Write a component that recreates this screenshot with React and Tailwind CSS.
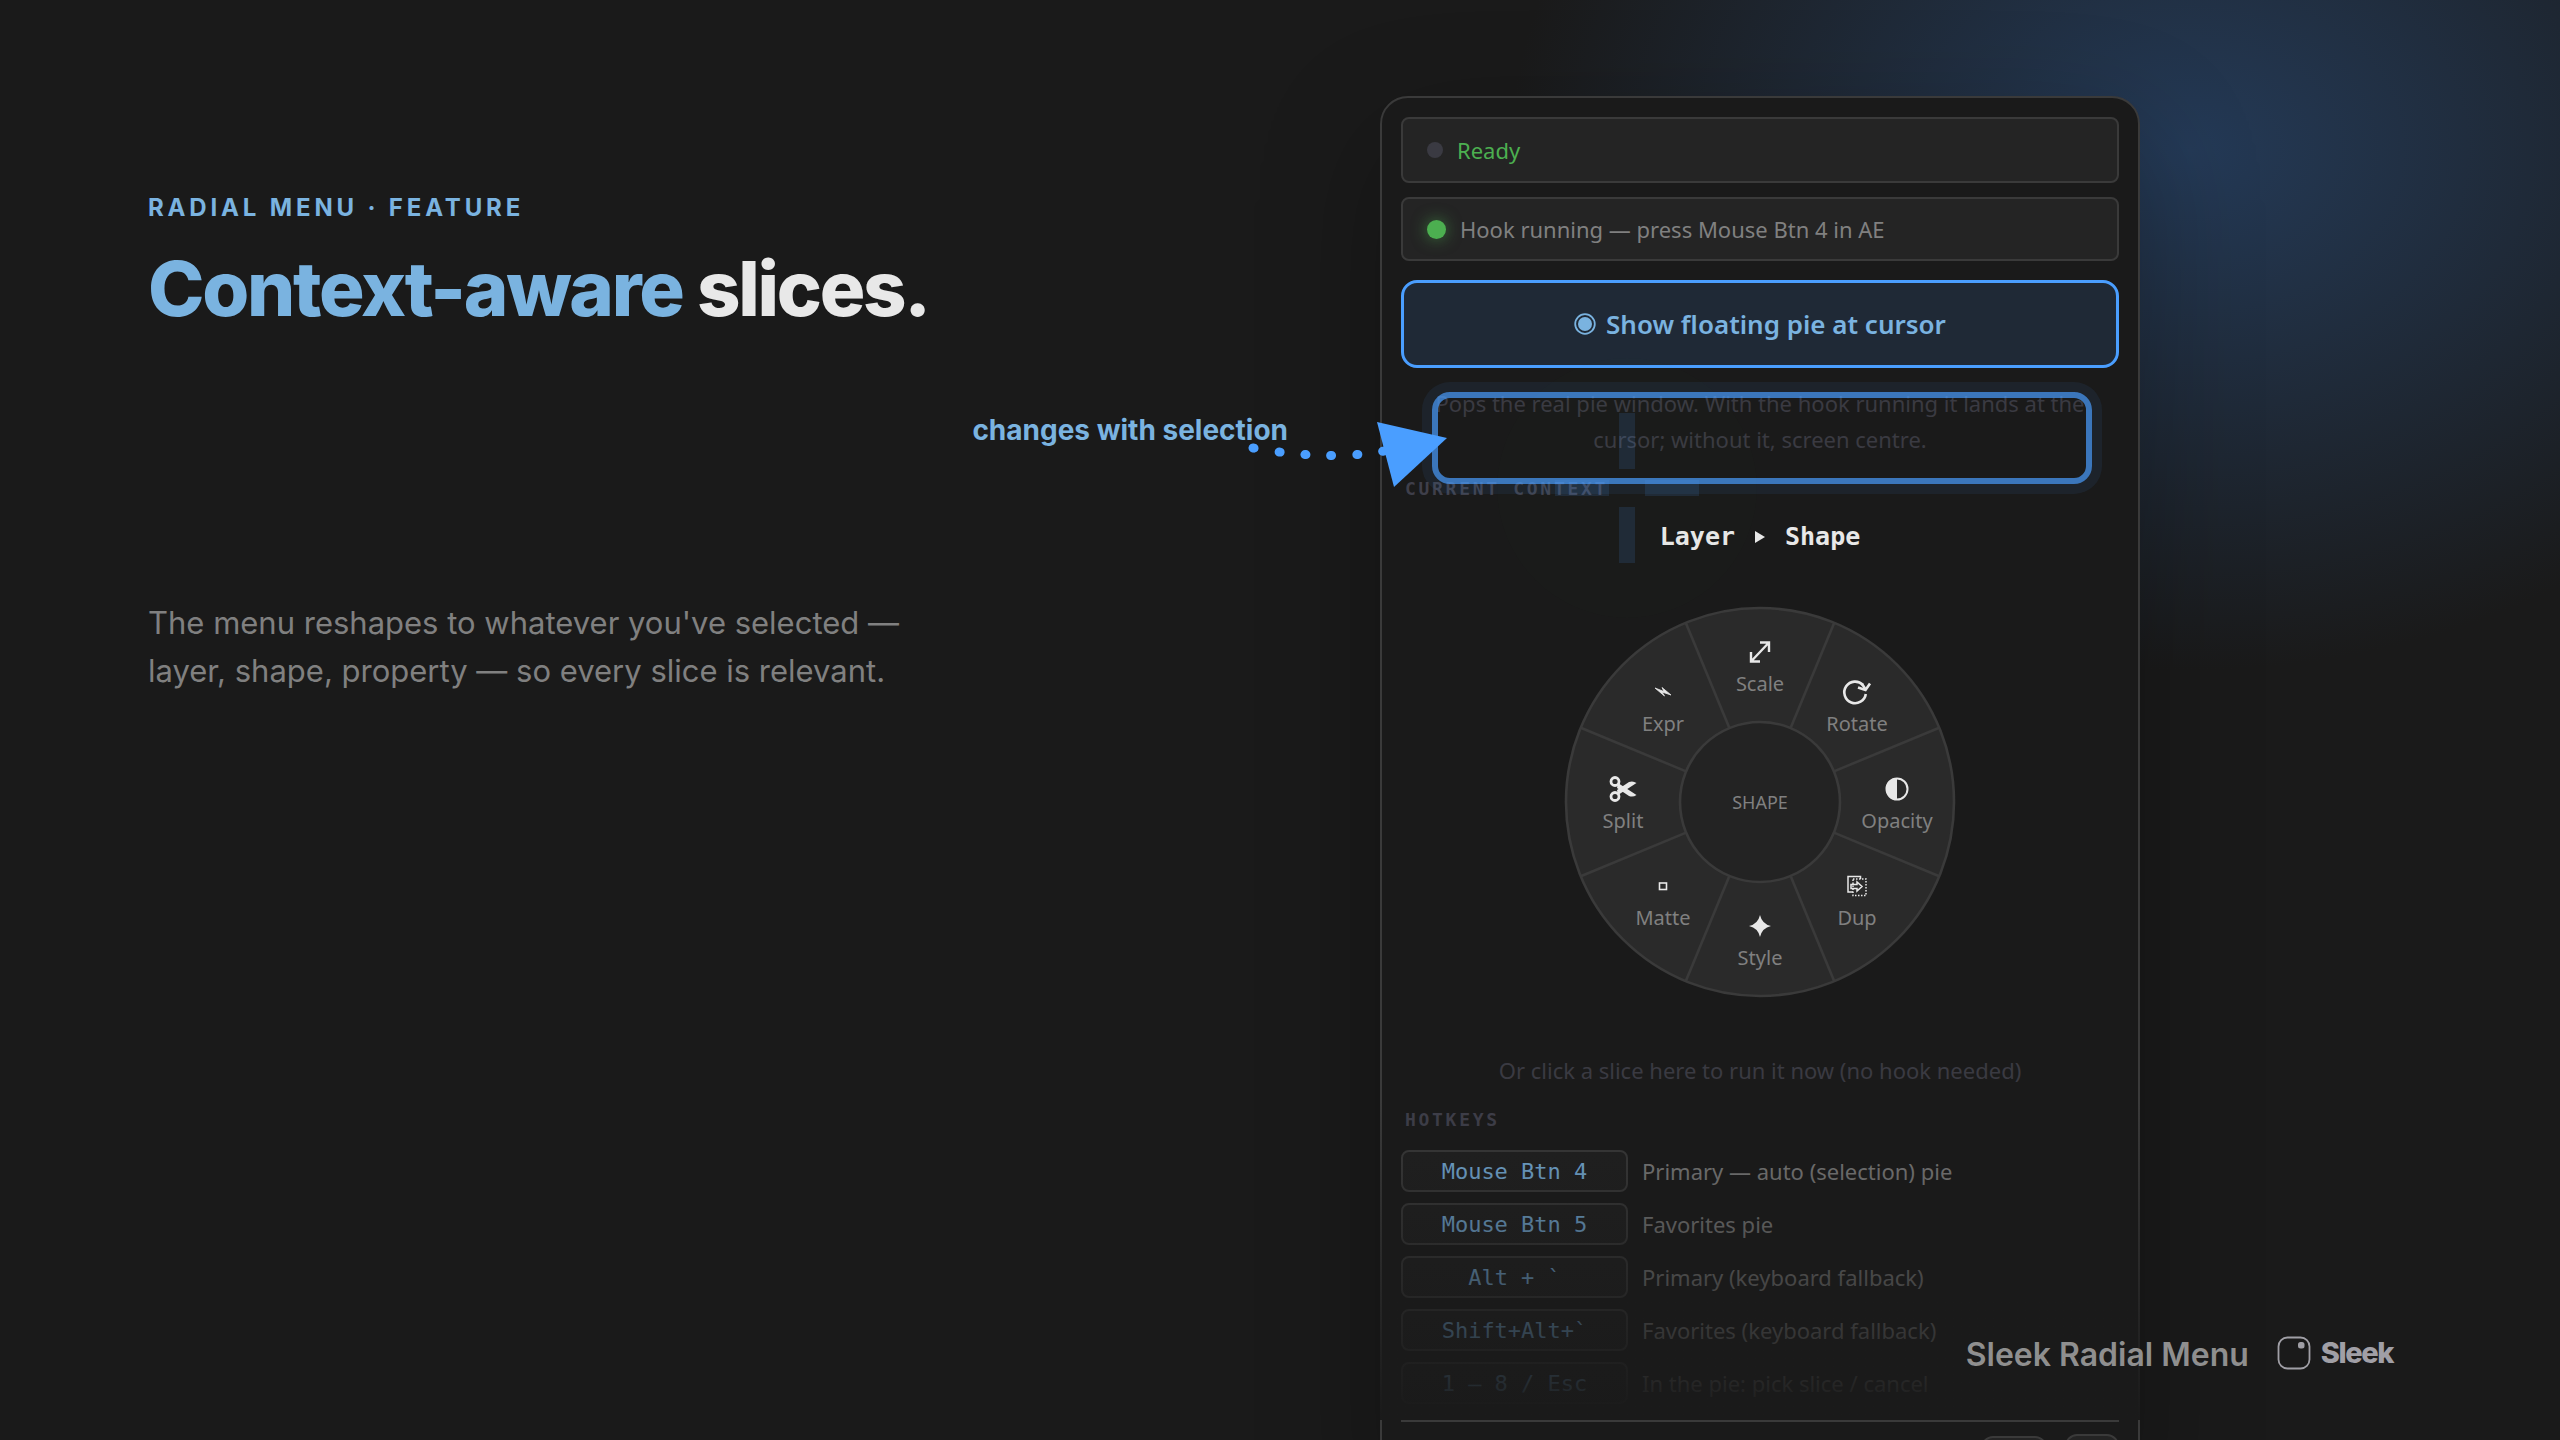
const icons = {
  scale: (
    <g fill="none" stroke="#e8e8e8" strokeWidth="2.400">
      <path d="M-8.500 9 8.500-9M0-9.500H9V0M-9 0V9.500H0" />
    </g>
  ),
  rotate: (
    <g fill="none" stroke="#e8e8e8" strokeWidth="2.600">
      <path d="M6-7A10.800 10.800 0 1 0 8.800 2" />
      <path d="M1-4.500 8.500-2 13-8.500" strokeWidth="2.600" />
      <path d="M5-8 9-2" />
    </g>
  ),
  opacity: (
    <g>
      <circle r="10.500" fill="none" stroke="#e8e8e8" strokeWidth="2" />
      <path d="M0-11A11 11 0 0 0 0 11Z" fill="#e8e8e8" />
    </g>
  ),
  dup: (
    <g fill="none" stroke="#e8e8e8" strokeWidth="1.500">
      <path d="M-4 6H-9V-9.500H3.500V-7" />
      <path d="M-4-7H9V9.500H-4Z" strokeDasharray="1.500 1.500" />
      <path d="M-6-1.500H0V-4L5 0.500 0 5V2.500H-6Z" />
    </g>
  ),
  style: <path d="M0-11Q2-2 11 0 2 2 0 11-2 2-11 0-2-2 0-11Z" fill="#e8e8e8" />,
  matte: <rect x="-3.500" y="-3" width="7" height="6.500" fill="none" stroke="#e8e8e8" strokeWidth="1.600" />,
  split: (
    <g fill="none" stroke="#e8e8e8">
      <circle cx="-8" cy="-7.500" r="4" strokeWidth="2.800" />
      <circle cx="-8" cy="7.500" r="4" strokeWidth="2.800" />
      <path d="M-5-6 13.500 6Q10 8.500 6 7L-6-1Z" fill="#e8e8e8" stroke="none" />
      <path d="M-5 6 13.500-6Q10-8.500 6-7L-6 1Z" fill="#e8e8e8" stroke="none" />
    </g>
  ),
  expr: <path d="M-8-4 1-0.500-1-4.500 8 3-1 0 1.500 4Z" fill="#e8e8e8" stroke="#e8e8e8" strokeWidth="0.800" />,
};

const slices = [
  { label: "Scale", icon: "scale", x: 0, y: -131 },
  { label: "Rotate", icon: "rotate", x: 97, y: -91 },
  { label: "Opacity", icon: "opacity", x: 137, y: 6 },
  { label: "Dup", icon: "dup", x: 97, y: 103 },
  { label: "Style", icon: "style", x: 0, y: 143 },
  { label: "Matte", icon: "matte", x: -97, y: 103 },
  { label: "Split", icon: "split", x: -137, y: 6 },
  { label: "Expr", icon: "expr", x: -97, y: -91 },
];

const hotkeys = [
  ["Mouse Btn 4", "Primary — auto (selection) pie"],
  ["Mouse Btn 5", "Favorites pie"],
  ["Alt + `", "Primary (keyboard fallback)"],
  ["Shift+Alt+`", "Favorites (keyboard fallback)"],
  ["1 – 8 / Esc", "In the pie: pick slice / cancel"],
];

const angles = [22.5, 67.5, 112.5, 157.5, 202.5, 247.5, 292.5, 337.5];

function Pie() {
  return (
    <svg viewBox="-200 -200 400 400" className="mx-auto mt-[50px] block size-[400px] overflow-visible font-['Noto_Sans']" role="img" aria-label="Shape pie menu">
      <circle r="194" fill="#2a2a2a" stroke="#3a3a3a" strokeWidth="2.600" />
      {angles.map((a) => (
        <line key={a} x1="0" y1="-80" x2="0" y2="-194" stroke="#3a3a3a" strokeWidth="2.600" transform={`rotate(${a})`} />
      ))}
      <circle r="80" fill="#232323" stroke="#3a3a3a" strokeWidth="2.600" />
      <text y="7" textAnchor="middle" fontSize="18" fill="#808080">SHAPE</text>
      {slices.map((s) => (
        <g key={s.label} transform={`translate(${s.x} ${s.y})`}>
          <g transform="translate(0 -19)">{icons[s.icon]}</g>
          <text y="20" textAnchor="middle" fontSize="20" fill="#808080">{s.label}</text>
        </g>
      ))}
    </svg>
  );
}

function SectionTitle({ children }) {
  return (
    <h2 className="mt-5 ml-1 font-['DejaVu_Sans_Mono',monospace] text-[18px] leading-6 font-bold tracking-[0.15em] text-[#3f3f4a]">
      {children}
    </h2>
  );
}

function Crosshair() {
  return (
    <svg viewBox="-130 -130 260 260" className="pointer-events-none absolute top-[260px] left-[115px] size-[260px]" aria-hidden="true">
      <circle r="130" fill="#4caf50" fillOpacity="0.010" />
      <g fill="#4a9eff" fillOpacity="0.130">
        <rect x="-8" y="-75" width="16" height="56" />
        <rect x="-8" y="19" width="16" height="56" />
        <rect x="-72" y="-8" width="54" height="16" />
        <rect x="18" y="-8" width="54" height="16" />
      </g>
    </svg>
  );
}

function Callout() {
  return (
    <>
      <div className="pointer-events-none absolute top-[294px] left-[50px] h-[92px] w-[660px] rounded-[18px] border-[6px] border-[#4a9eff] opacity-70 shadow-[0_0_0_10px_#4a9eff1c]" />
      <svg viewBox="0 0 220 80" className="pointer-events-none absolute top-[317px] left-[-144px] h-20 w-[220px] overflow-visible" aria-hidden="true">
        <path d="M15 33Q100 48 160 33" fill="none" stroke="#4a9eff" strokeWidth="9" strokeLinecap="round" strokeDasharray="1 25" />
        <path d="M139 7 209 23 156 72Z" fill="#4a9eff" />
      </svg>
      <p className="absolute top-[312px] right-[850px] text-right font-[Inter,sans-serif] text-[28px] leading-10 font-bold whitespace-nowrap text-[#7ab3e0]">
        changes with selection
      </p>
    </>
  );
}

function Panel() {
  return (
    <section className="relative h-[1400px] w-[760px] rounded-t-[28px] border-2 border-[#3a3a3a] bg-[#1a1a1a] px-[19px] pt-[19px] font-['Noto_Sans',sans-serif] shadow-[0_40px_120px_rgba(0,0,0,0.25)]">
      <div className="flex h-[66px] items-center gap-[14px] rounded-lg border-2 border-[#3a3a3a] bg-[#242424] px-6 text-[22px] text-[#4caf50]">
        <span className="size-4 rounded-full bg-[#3a3a42]" />
        Ready
      </div>
      <div className="mt-[14px] flex h-16 items-center gap-[14px] rounded-lg border-2 border-[#3a3a3a] bg-[#242424] px-6 text-[22px] text-[#808080]">
        <span className="size-[19px] rounded-full bg-[#4caf50] shadow-[0_0_16px_#4caf5099]" />
        Hook running — press Mouse Btn 4 in AE
      </div>
      <button className="mt-[19px] flex h-[88px] w-full items-center justify-center gap-[10px] rounded-2xl border-[3px] border-[#4a9eff] bg-[#1f2936] text-[26px] font-semibold text-[#7ab3e0]">
        <svg viewBox="0 0 22 22" className="size-[22px]" aria-hidden="true">
          <circle cx="11" cy="11" r="9.800" fill="none" stroke="#7ab3e0" strokeWidth="1.800" />
          <circle cx="11" cy="11" r="7" fill="#7ab3e0" />
        </svg>
        Show floating pie at cursor
      </button>
      <p className="mt-[17px] text-center text-[22px] leading-9 text-[#3a3a42]">
        Pops the real pie window. With the hook running it lands at the
        <br />
        cursor; without it, screen centre.
      </p>
      <SectionTitle>CURRENT CONTEXT</SectionTitle>
      <p className="mt-[21px] flex h-[30px] items-center justify-center gap-5 font-['DejaVu_Sans_Mono',monospace] text-[25px] font-bold text-[#e8e8e8]">
        Layer
        <svg viewBox="0 0 10 12" className="h-3 w-[10px]" aria-hidden="true">
          <path d="M0 0 10 6 0 12Z" fill="#e8e8e8" />
        </svg>
        Shape
      </p>
      <Pie />
      <p className="mt-[50px] text-center text-[22px] leading-9 text-[#3a3a42]">Or click a slice here to run it now (no hook needed)</p>
      <SectionTitle>HOTKEYS</SectionTitle>
      <dl className="mt-[18px] flex flex-col gap-[11px]">
        {hotkeys.map(([k, v]) => (
          <div key={k} className="flex h-[42px] items-center gap-[14px] text-[22px] text-[#808080]">
            <dt className="flex h-full w-[227px] items-center justify-center rounded-lg border-2 border-[#3a3a3a] bg-[#202020] font-['DejaVu_Sans_Mono',monospace] text-[22px] text-[#7ab3e0]">
              {k}
            </dt>
            <dd>{v}</dd>
          </div>
        ))}
      </dl>
      <div className="pointer-events-none absolute -inset-x-[2px] top-[1002px] h-[320px] bg-linear-to-b from-[#1a1a1a00] to-[#1a1a1a]" />
      <footer className="relative mt-4 flex items-center justify-end gap-[18px] border-t-2 border-[#3a3a3a] pt-3">
        <button aria-label="Minimise" className="h-[50px] w-[66px] rounded-xl border-2 border-[#3a3a3a] bg-[#242424]" />
        <button aria-label="Settings" className="h-[54px] w-[54px] rounded-xl border-2 border-[#3a3a3a] bg-[#242424]" />
      </footer>
      <Crosshair />
      <Callout />
    </section>
  );
}

function Brand() {
  return (
    <div className="absolute right-[167px] bottom-[65px] flex items-center gap-7">
      <span className="text-[32px] leading-10 font-semibold text-[#8f8f8f]">Sleek Radial Menu</span>
      <span className="flex items-center gap-[10px] pb-1">
        <svg viewBox="0 0 34 34" className="size-[34px]" aria-hidden="true">
          <rect x="1.500" y="1.500" width="31" height="31" rx="9" fill="none" stroke="#a09fa6" strokeWidth="1.800" />
          <rect x="21" y="6" width="6.500" height="6.500" rx="2.500" fill="#a09fa6" />
        </svg>
        <span className="text-[29px] leading-9 font-extrabold tracking-tighter text-[#a09fa6]">Sleek</span>
      </span>
    </div>
  );
}

export default function App() {
  return (
    <main className="relative flex h-screen justify-between overflow-hidden bg-[#1a1a1a] bg-[radial-gradient(ellipse_680px_520px_at_2190px_150px,#243a57,#1a1a1a)] pr-[420px] pl-[148px] font-[Inter,sans-serif]">
      <div className="pt-[192px]">
        <p className="text-[24px] leading-8 font-bold tracking-[0.16em] text-[#7ab3e0]">RADIAL MENU · FEATURE</p>
        <h1 className="mt-[22px] text-[76px] leading-[84px] font-extrabold tracking-[-0.03em] text-[#e8e8e8]">
          <span className="text-[#7ab3e0]">Context-aware</span> slices.
        </h1>
        <p className="mt-[269px] text-[31px] leading-[48px] text-[#808080]">
          The menu reshapes to whatever you've selected —<br />
          layer, shape, property — so every slice is relevant.
        </p>
      </div>
      <div className="pt-24">
        <Panel />
      </div>
      <Brand />
    </main>
  );
}
